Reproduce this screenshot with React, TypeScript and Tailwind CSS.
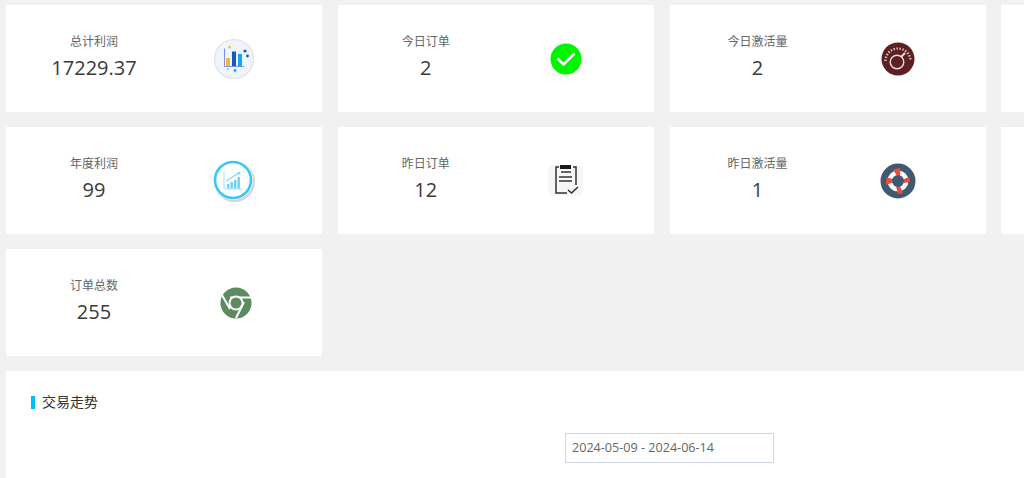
import React from "react";

function ChartIcon() {
    return (
        <svg width="42" height="42" viewBox="0 0 42 42">
            <circle cx="21" cy="21" r="19.5" fill="#eef5fd" stroke="#dfe3e8" strokeWidth="1.2" />
            <path d="M11.5 10.5V28.5H31" fill="none" stroke="#7d8fe0" strokeWidth="1" />
            <rect x="13" y="20" width="4" height="8" fill="#f7b733" />
            <rect x="19" y="13.5" width="4" height="14.5" fill="#1556c9" />
            <rect x="25" y="16" width="4" height="12" fill="#12a5f4" />
            <circle cx="16.5" cy="9" r="1.6" fill="#f7c948" />
            <circle cx="32" cy="13" r="1.6" fill="#1556c9" />
            <circle cx="34.5" cy="18" r="1.4" fill="#1556c9" />
            <circle cx="15" cy="31" r="1" fill="#7cc4f8" />
            <circle cx="22" cy="32.5" r="1.4" fill="#2f9cf2" />
        </svg>
    );
}

function GrowthIcon() {
    return (
        <svg width="44" height="44" viewBox="0 0 44 44">
            <circle cx="22.5" cy="22.5" r="20.5" fill="#d4d4d4" />
            <circle cx="21" cy="21" r="20" fill="#ffffff" />
            <circle cx="21" cy="21" r="18" fill="#ffffff" stroke="#3cc8f6" strokeWidth="2.6" />
            <path d="M12 12V30H31" fill="none" stroke="#8adcf6" strokeWidth="0.8" />
            <path d="M14 22L27 14" stroke="#7fd6f4" strokeWidth="1.2" />
            <path d="M25 13L29 13L27 16Z" fill="#7fd6f4" />
            <rect x="15" y="25" width="2.4" height="4.5" fill="#6fd0f2" />
            <rect x="18.5" y="23" width="2.4" height="6.5" fill="#6fd0f2" />
            <rect x="22" y="21" width="2.4" height="8.5" fill="#6fd0f2" />
            <rect x="25.5" y="18" width="2.4" height="11.5" fill="#6fd0f2" />
        </svg>
    );
}

function ChromeIcon() {
    return (
        <svg width="32" height="32" viewBox="0 0 32 32" className="ml-[3px] mt-[1px]">
            <circle cx="16" cy="16" r="15.5" fill="#5d8a60" />
            <path d="M10 10.5H31M2 8L10 22M24 15L16 31" stroke="#ffffff" strokeWidth="2" fill="none" />
            <circle cx="16" cy="16" r="6.5" fill="#5d8a60" stroke="#ffffff" strokeWidth="2" />
        </svg>
    );
}

function CheckIcon() {
    return (
        <svg width="32" height="32" viewBox="0 0 32 32">
            <circle cx="16" cy="16" r="15.5" fill="#00f400" />
            <path d="M7.5 15.5L13.5 21.5L24.5 10.5" fill="none" stroke="#ffffff" strokeWidth="2.6" />
        </svg>
    );
}

function ClipboardIcon() {
    return (
        <svg width="36" height="36" viewBox="0 0 36 36" className="mt-[3px]">
            <rect x="0" y="1" width="35" height="31" rx="5" fill="#f6f6f6" />
            <path d="M11 3H8V29H19M25 3H28V21" fill="none" stroke="#333333" strokeWidth="1.5" />
            <rect x="12" y="1" width="11" height="4" fill="#1a1a1a" />
            <path d="M13 8H23M11 13H24M11 17H24" stroke="#333333" strokeWidth="1.5" />
            <path d="M20 26L23.5 29L30 23" fill="none" stroke="#333333" strokeWidth="1.6" />
        </svg>
    );
}

function GaugeIcon() {
    return (
        <svg width="34" height="34" viewBox="0 0 34 34" className="mt-[1px]">
            <circle cx="17" cy="17" r="16.5" fill="#5c2022" />
            <circle cx="16" cy="20" r="6.8" fill="none" stroke="#ead9d6" strokeWidth="1.4" />
            <path d="M20 15L24 11" stroke="#ead9d6" strokeWidth="2" />
            <path
                d="M4.5 19A12.5 12.5 0 0 1 29.5 19"
                fill="none"
                stroke="#d9c1bd"
                strokeWidth="2.4"
                strokeDasharray="1.4 1.6"
            />
        </svg>
    );
}

function BuoyIcon() {
    return (
        <svg width="36" height="36" viewBox="0 0 36 36">
            <circle cx="18" cy="18" r="14" fill="#ffffff" stroke="#3f5a70" strokeWidth="7" />
            <path d="M13 6.5L17 13L20 12.5L20.5 5Z" fill="#ef4a36" />
            <path d="M6 22L12.5 19.5L13.5 16L6 14.5Z" fill="#ef4a36" />
            <path d="M22.5 16.5L24 20L30 19L29.5 14Z" fill="#ef4a36" />
            <path d="M16 23.5L20 23L23 30.5L18 31Z" fill="#ef4a36" />
            <circle cx="18" cy="18" r="6" fill="#3f5a70" />
        </svg>
    );
}

type CardType = { title: string; value: string; icon: React.ReactNode };

const cards: CardType[] = [
    { title: "总计利润", value: "17229.37", icon: <ChartIcon /> },
    { title: "今日订单", value: "2", icon: <CheckIcon /> },
    { title: "今日激活量", value: "2", icon: <GaugeIcon /> },
    { title: "", value: "", icon: null },
    { title: "年度利润", value: "99", icon: <GrowthIcon /> },
    { title: "昨日订单", value: "12", icon: <ClipboardIcon /> },
    { title: "昨日激活量", value: "1", icon: <BuoyIcon /> },
    { title: "", value: "", icon: null },
    { title: "订单总数", value: "255", icon: <ChromeIcon /> },
];

function StatCard({ title, value, icon }: CardType) {
    return (
        <div className="flex h-[107px] items-center bg-white">
            <div className="flex w-[176px] flex-col items-center text-center">
                <div className="h-[18px] text-[12px] leading-[18px] text-[#666666]">{title}</div>
                <div className="mt-[1px] h-[32px] text-[20px] leading-[32px] text-[#3a3a3a]">{value}</div>
            </div>
            <div className="flex w-[104px] items-center justify-center">{icon}</div>
        </div>
    );
}

export default function App() {
    return (
        <div
            className="h-[478px] w-[1024px] overflow-hidden bg-[#f1f1f1] pl-[6px] pt-[5px]"
            style={{ fontFamily: '"Open Sans", "Noto Sans CJK SC", sans-serif' }}
        >
            <div className="grid w-[1312px] grid-cols-[repeat(4,316px)] gap-x-[15.75px] gap-y-[15px]">
                {cards.map((card, i) => (
                    <StatCard key={i} {...card} />
                ))}
            </div>
            <div className="mt-[15px] h-[200px] w-[1312px] bg-white pl-[25px] pt-[25px]">
                <div className="flex h-[13px] items-center">
                    <div className="h-[13px] w-[4px] bg-[#00bfff]" />
                    <div className="ml-[7px] pb-[2px] text-[14px] leading-[14px] text-[#333333]">交易走势</div>
                </div>
                <div className="ml-[534px] mt-[24px] flex h-[30px] w-[209px] items-center border border-[#ccd5e6] bg-white pl-[6px] pt-[1px] text-[12.6px] text-[#666666]">
                    2024-05-09 - 2024-06-14
                </div>
            </div>
        </div>
    );
}
